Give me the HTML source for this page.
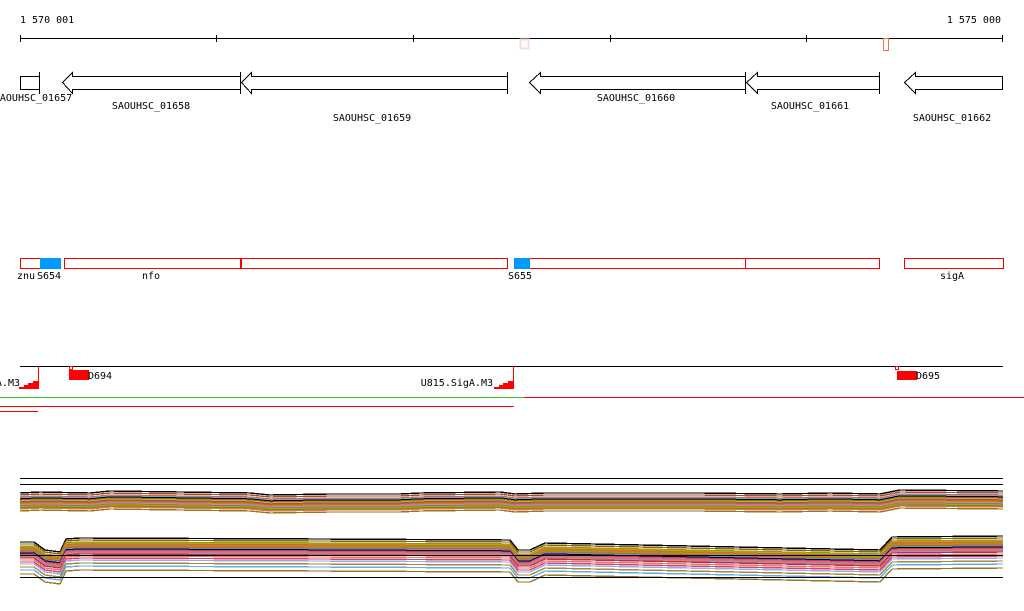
<!DOCTYPE html>
<html><head><meta charset="utf-8"><style>
body{margin:0;background:#fff;width:1024px;height:611px;overflow:hidden}
svg{display:block}
text{font-family:"DejaVu Sans Mono","Liberation Mono",monospace;font-size:10px;fill:#000}
</style></head><body>
<svg width="1024" height="611" viewBox="0 0 1024 611" xmlns="http://www.w3.org/2000/svg" shape-rendering="crispEdges">
<defs>
<polyline id="t" fill="none" points="20,500 40,499 90,500 110,498 180,499 250,500 270,502 330,501 400,501 420,500 500,499 515,501 545,500 600,500 700,500 780,501 830,500 880,501 900,497 1003,498"/>
<polyline id="b" fill="none" points="20,548 34,548 45,556 60,558 66,545 80,544 320,545 510,546 518,556 530,556 545,549 880,556 892,543 1003,542"/>
</defs>
<text x="20" y="23">1 570 001</text>
<text x="1001" y="23" text-anchor="end">1 575 000</text>
<line x1="20" y1="38.5" x2="1003" y2="38.5" stroke="#000"/>
<g stroke="#000"><line x1="20.5" y1="35" x2="20.5" y2="42"/><line x1="216.5" y1="35" x2="216.5" y2="42"/><line x1="413.5" y1="35" x2="413.5" y2="42"/><line x1="610.5" y1="35" x2="610.5" y2="42"/><line x1="806.5" y1="35" x2="806.5" y2="42"/><line x1="1002.5" y1="35" x2="1002.5" y2="42"/></g>
<rect x="520.5" y="39.5" width="8" height="9" fill="#fff" stroke="#f8ddd0" stroke-width="2"/>
<rect x="883.5" y="38.5" width="5" height="12" fill="#fff" stroke="#f07050"/>
<g fill="#fff" stroke="#000">
<rect x="20.5" y="76.5" width="19" height="13"/>
<line x1="39.5" y1="72" x2="39.5" y2="94"/>
<polygon points="240.5,76.5 72.5,76.5 72.5,72.5 62.5,82.5 72.5,93.5 72.5,89.5 240.5,89.5"/>
<line x1="240.5" y1="72" x2="240.5" y2="94"/>
<polygon points="507.5,76.5 251.5,76.5 251.5,72.5 241.5,82.5 251.5,93.5 251.5,89.5 507.5,89.5"/>
<line x1="507.5" y1="72" x2="507.5" y2="94"/>
<polygon points="745.5,76.5 540.5,76.5 540.5,72.5 529.5,82.5 540.5,93.5 540.5,89.5 745.5,89.5"/>
<line x1="745.5" y1="72" x2="745.5" y2="94"/>
<polygon points="879.5,76.5 757.5,76.5 757.5,72.5 746.5,82.5 757.5,93.5 757.5,89.5 879.5,89.5"/>
<line x1="879.5" y1="72" x2="879.5" y2="94"/>
<polygon points="1002.5,76.5 915.5,76.5 915.5,72.5 904.5,82.5 915.5,93.5 915.5,89.5 1002.5,89.5"/>
</g>
<text x="33" y="101" text-anchor="middle">SAOUHSC_01657</text>
<text x="151" y="109" text-anchor="middle">SAOUHSC_01658</text>
<text x="372" y="121" text-anchor="middle">SAOUHSC_01659</text>
<text x="636" y="101" text-anchor="middle">SAOUHSC_01660</text>
<text x="810" y="109" text-anchor="middle">SAOUHSC_01661</text>
<text x="952" y="121" text-anchor="middle">SAOUHSC_01662</text>
<g fill="#fff" stroke="#f00">
<rect x="20.5" y="258.5" width="40" height="10"/>
<rect x="64.5" y="258.5" width="176" height="10"/>
<rect x="241.5" y="258.5" width="266" height="10"/>
<rect x="514.5" y="258.5" width="231" height="10"/>
<rect x="745.5" y="258.5" width="134" height="10"/>
<rect x="904.5" y="258.5" width="99" height="10"/>
</g>
<rect x="40" y="258" width="21" height="11" fill="#0099ff"/>
<rect x="514" y="258" width="16" height="11" fill="#0099ff"/>
<text x="17" y="279">znu</text>
<text x="37" y="279">S654</text>
<text x="151" y="279" text-anchor="middle">nfo</text>
<text x="508" y="279">S655</text>
<text x="952" y="279" text-anchor="middle">sigA</text>
<line x1="20" y1="366.5" x2="1003" y2="366.5" stroke="#000"/>
<g fill="#f00">
<rect x="38" y="366" width="1" height="23"/>
<polygon points="19,389 39,389 39,381 33,381 33,383 28,383 28,385 24,385 24,387 19,387"/>
<rect x="513" y="366" width="1" height="23"/>
<polygon points="494,389 514,389 514,381 508,381 508,383 503,383 503,385 499,385 499,387 494,387"/>
<rect x="69" y="370" width="20" height="10"/>
<rect x="897" y="371" width="20" height="9"/>
</g>
<rect x="69.5" y="366.5" width="3" height="3" fill="#fff" stroke="#f00"/>
<rect x="895.5" y="366.5" width="3" height="3" fill="#fff" stroke="#f00"/>
<text x="88" y="379">D694</text>
<text x="916" y="379">D695</text>
<text x="20" y="386" text-anchor="end">A.M3</text>
<text x="493" y="386" text-anchor="end">U815.SigA.M3</text>
<line x1="0" y1="397.5" x2="524" y2="397.5" stroke="#22cc22"/>
<line x1="524" y1="397.5" x2="1024" y2="397.5" stroke="#f00"/>
<line x1="0" y1="406.5" x2="514" y2="406.5" stroke="#f00"/>
<line x1="0" y1="411.5" x2="38" y2="411.5" stroke="#f00"/>
<line x1="20" y1="478.5" x2="1003" y2="478.5" stroke="#000"/>
<line x1="20" y1="484.5" x2="1003" y2="484.5" stroke="#000"/>
<g stroke-width="1.4">
<use href="#t" y="-7" stroke="#000"/>
<use href="#t" y="-5" stroke="#a0522d"/>
<use href="#t" y="-3" stroke="#e0603a"/>
<use href="#t" y="-2" stroke="#66aaee"/>
<use href="#t" y="-1" stroke="#000"/>
<use href="#t" y="0" stroke="#b06020"/>
<use href="#t" y="1" stroke="#99cc00"/>
<use href="#t" y="2" stroke="#cc3399"/>
<use href="#t" y="3" stroke="#888800"/>
<use href="#t" y="4" stroke="#ff6633"/>
<use href="#t" y="5" stroke="#8899dd"/>
<use href="#t" y="6" stroke="#cc6633"/>
<use href="#t" y="7" stroke="#66cc00"/>
<use href="#t" y="8" stroke="#aa6633"/>
<use href="#t" y="9" stroke="#dd7744"/>
<use href="#t" y="11" stroke="#997722"/>
</g>
<g stroke-width="1.4">
<use href="#b" y="-6" stroke="#000"/>
<use href="#b" y="-4" stroke="#886600"/>
<use href="#b" y="-2" stroke="#aa8822"/>
<use href="#b" y="-1" stroke="#99bb00"/>
<use href="#b" y="0" stroke="#e06030"/>
<use href="#b" y="1" stroke="#cc7733"/>
<use href="#b" y="2" stroke="#88aa11"/>
<use href="#b" y="3" stroke="#dd5522"/>
<use href="#b" y="4" stroke="#5599ee"/>
<use href="#b" y="5" stroke="#000"/>
<use href="#b" y="6" stroke="#cc3399"/>
<use href="#b" y="7" stroke="#e07040"/>
<use href="#b" y="8" stroke="#aa77cc"/>
<use href="#b" y="9" stroke="#dd8855"/>
<use href="#b" y="10" stroke="#b03060"/>
<use href="#b" y="12" stroke="#ee7755"/>
<use href="#b" y="14" stroke="#cc4488"/>
<use href="#b" y="16" stroke="#99aadd"/>
<use href="#b" y="19" stroke="#aa8833"/>
<use href="#b" y="22" stroke="#66aaee"/>
<use href="#b" y="26" stroke="#997722"/>
</g>
<line x1="20" y1="555.5" x2="1003" y2="555.5" stroke="#000"/>
<line x1="20" y1="577.5" x2="1003" y2="577.5" stroke="#000"/>
</svg>
</body></html>
